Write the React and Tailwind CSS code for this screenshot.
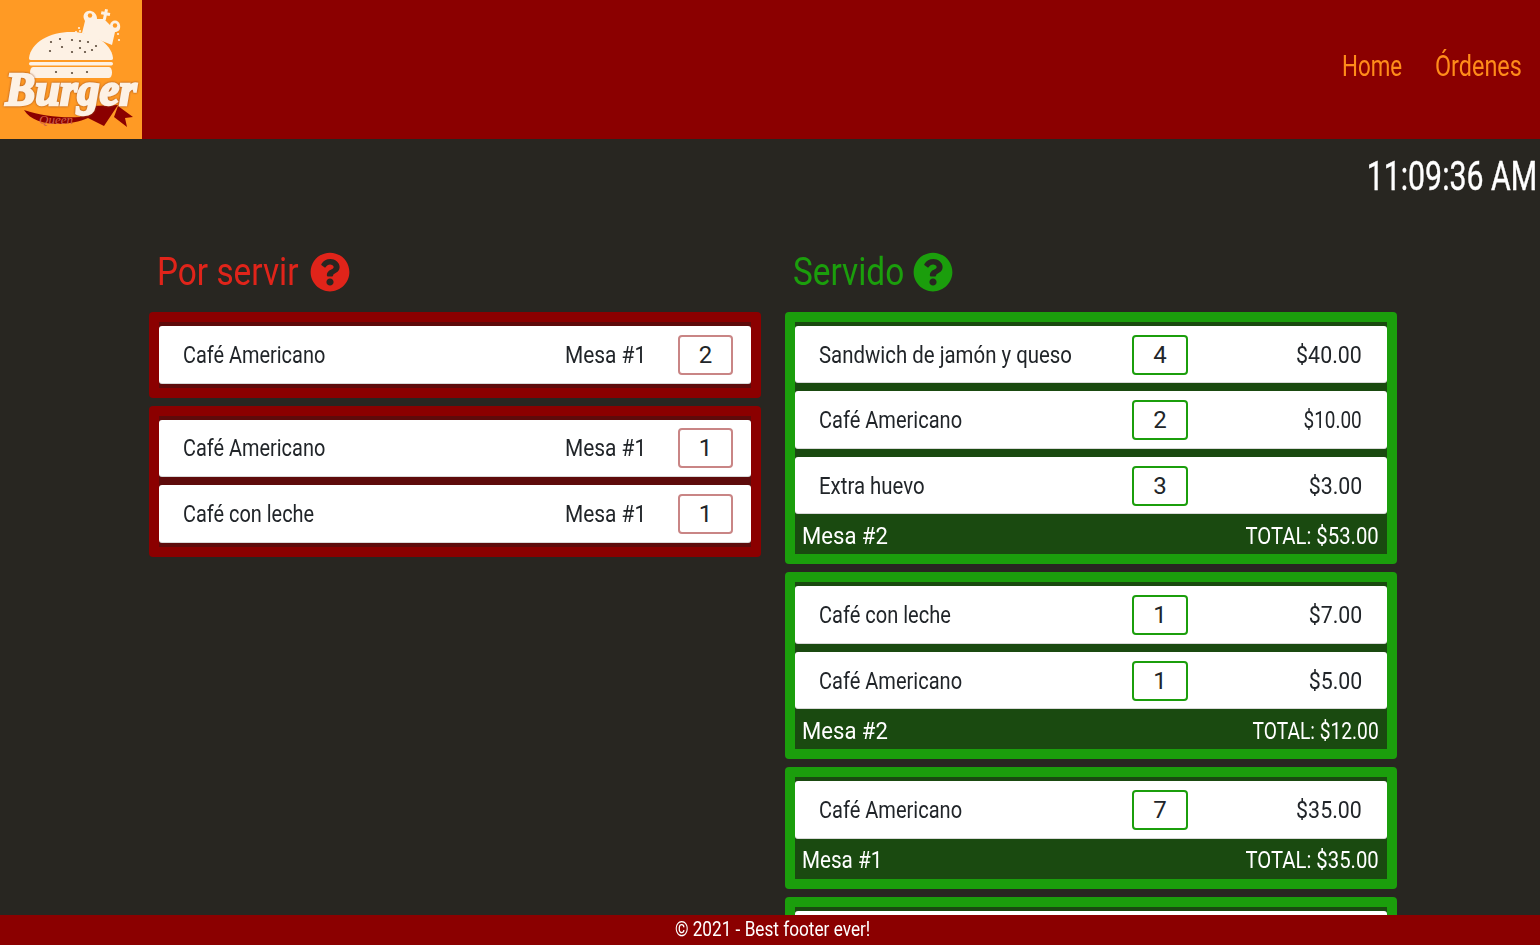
import { FaQuestionCircle } from 'react-icons/fa'

const PENDING = [
  [{ name: 'Café Americano', table: 'Mesa #1', qty: 2 }],
  [
    { name: 'Café Americano', table: 'Mesa #1', qty: 1 },
    { name: 'Café con leche', table: 'Mesa #1', qty: 1 },
  ],
]

const SERVED = [
  {
    table: 'Mesa #2',
    total: 'TOTAL: $53.00',
    items: [
      { name: 'Sandwich de jamón y queso', qty: 4, price: '$40.00', wide: true },
      { name: 'Café Americano', qty: 2, price: '$10.00', narrowPrice: true },
      { name: 'Extra huevo', qty: 3, price: '$3.00', wide: true },
    ],
  },
  {
    table: 'Mesa #2',
    total: 'TOTAL: $12.00',
    narrowTotal: true,
    items: [
      { name: 'Café con leche', qty: 1, price: '$7.00' },
      { name: 'Café Americano', qty: 1, price: '$5.00' },
    ],
  },
  {
    table: 'Mesa #1',
    total: 'TOTAL: $35.00',
    items: [{ name: 'Café Americano', qty: 7, price: '$35.00' }],
  },
  { hideFooter: true, items: [] },
]

export default function App() {
  return (
    <div className="flex h-screen flex-col overflow-hidden bg-[#282621] font-['Roboto',sans-serif]">
      <header className="flex h-[139px] shrink-0 items-start justify-between bg-[#8b0000]">
        <Logo />
        <nav className="mt-[48px] mr-[19px] flex gap-[32px] text-[30px] leading-[36px] text-[#ff8c1a]">
          <a className="w-[60px]"><span className="-ml-[1px] inline-block origin-left scale-x-[0.745] whitespace-nowrap">Home</span></a>
          <a className="w-[86px]"><span className="inline-block origin-left scale-x-[0.78] whitespace-nowrap">Órdenes</span></a>
        </nav>
      </header>

      <main className="min-h-0 flex-1 overflow-hidden">
        <div className="mt-[15px] pr-[3px] text-right text-[40px] leading-[46px] text-white">
          <span className="inline-block origin-right scale-x-[0.757] whitespace-nowrap [-webkit-text-stroke:0.4px_white]">11:09:36 AM</span>
        </div>

        <div className="mt-[51px] ml-[149px] flex w-[1248px] gap-[24px]">
          <section className="w-[612px] pt-[0.1px]">
            <Title color="text-[#e0241a]" textWidth="w-[143px]">Por servir</Title>
            <div className="flex flex-col gap-2">
              {PENDING.map((order, i) => (
                <Card key={i} tone="red">
                  {order.map((item, j) => (
                    <PendingRow key={j} item={item} />
                  ))}
                </Card>
              ))}
            </div>
          </section>

          <section className="w-[612px]">
            <Title color="text-[#1b9e0c]" textWidth="w-[110px]">Servido</Title>
            <div className="flex flex-col gap-2">
              {SERVED.map((order, i) => (
                <Card key={i} tone="green" footer={order.hideFooter ? null : order}>
                  {order.items.length > 0
                    ? order.items.map((item, j) => <ServedRow key={j} item={item} />)
                    : <div className="h-[57.5px] rounded-[3px] bg-white" />}
                </Card>
              ))}
            </div>
          </section>
        </div>
      </main>

      <footer className="h-[30px] shrink-0 bg-[#8b0000] pl-[6px] text-center text-[20px] leading-[28px] text-white">
        <span className="inline-block scale-x-[0.86] whitespace-nowrap">© 2021 - Best footer ever!</span>
      </footer>
    </div>
  )
}

function Title({ children, color, textWidth }) {
  return (
    <h2 className={`mb-[18.9px] flex h-[42px] items-center pl-[8px] text-[39px] leading-[42px] ${color}`}>
      <span className={textWidth}>
        <span className="inline-block origin-left scale-x-[0.855] whitespace-nowrap">{children}</span>
      </span>
      <FaQuestionCircle className="ml-[9.5px] h-[40px] w-[40px]" />
    </h2>
  )
}

function Card({ tone, footer, children }) {
  const outer = tone === 'red' ? 'bg-[#8b0000]' : 'bg-[#1b9e0c]'
  const inner = tone === 'red' ? 'bg-[#5e0b0b]' : 'bg-[#1a4a10]'
  return (
    <div className={`rounded-[4px] p-[10px] ${outer}`}>
      <div className={`${inner} ${footer ? 'pt-[4px]' : 'py-[4px]'}`}>
        <div className="flex flex-col gap-2">{children}</div>
        {footer && (
          <div className="flex h-[40px] items-center justify-between pt-[3px] pr-[8px] pl-[7px] text-[24px] text-white">
            <span className={`inline-block origin-left whitespace-nowrap ${footer.table === 'Mesa #1' ? 'scale-x-[0.86]' : 'scale-x-[0.92]'}`}>{footer.table}</span>
            <span className={`inline-block origin-right whitespace-nowrap ${footer.narrowTotal ? 'scale-x-[0.8]' : 'scale-x-[0.845]'}`}>{footer.total}</span>
          </div>
        )}
      </div>
    </div>
  )
}

function PendingRow({ item }) {
  return (
    <div className="flex h-[57.6px] items-center rounded-[3px] bg-white pl-[24px] text-[24px] text-[#212529] shadow-[inset_0_-1px_0_rgba(0,0,0,0.15)]">
      <span className="w-[382px]"><span className="inline-block origin-left scale-x-[0.83] whitespace-nowrap">{item.name}</span></span>
      <span className="w-[113px]"><span className="inline-block origin-left scale-x-[0.87] whitespace-nowrap">{item.table}</span></span>
      <Qty className="w-[55px] border-[#c98585]">{item.qty}</Qty>
    </div>
  )
}

function ServedRow({ item }) {
  return (
    <div className="flex h-[57.5px] items-center rounded-[3px] bg-white pr-[25px] pl-[24px] text-[24px] text-[#212529] shadow-[inset_0_-1px_0_rgba(0,0,0,0.15)]">
      <span className="w-[313px]"><span className={`inline-block origin-left whitespace-nowrap ${item.wide ? 'scale-x-[0.85]' : 'scale-x-[0.835]'}`}>{item.name}</span></span>
      <Qty className="w-[56px] border-[#1b9e0c]">{item.qty}</Qty>
      <span className="flex-1 text-right"><span className={`inline-block origin-right whitespace-nowrap ${item.narrowPrice ? 'scale-x-[0.79]' : 'scale-x-[0.89]'}`}>{item.price}</span></span>
    </div>
  )
}

function Qty({ className, children }) {
  return (
    <span className={`flex h-[40px] items-center justify-center rounded-[4px] border-2 bg-white text-[24px] ${className}`}>
      {children}
    </span>
  )
}

const CREAM = '#fdf1e4'
const ORANGE = '#ff9a24'

function Logo() {
  return (
    <svg className="h-[139px] w-[142px] shrink-0" viewBox="0 0 142 139">
      <rect width="142" height="139" fill={ORANGE} />
      {/* crown */}
      <path
        d="M82 33 L85 21 C81 15 86 10 91 11 C95 12 97 15 97 19 L104 19 L110 25 C111 19 119 19 120 25 C121 30 118 32 115 32 L112 45 Z"
        fill={CREAM}
      />
      <circle cx="90" cy="15.5" r="2.2" fill={ORANGE} />
      <circle cx="115" cy="25.5" r="2.2" fill={ORANGE} />
      <path d="M104 9 h3 v3 h3 v3 h-3 v5 h-3 v-5 h-3 v-3 h3 z" fill={CREAM} transform="rotate(12 105 14)" />
      {[[76, 32], [79, 28], [80, 31], [118, 34], [119, 40]].map(([x, y], i) => (
        <circle key={i} cx={x} cy={y} r="1.1" fill={CREAM} />
      ))}
      {/* bun and patty */}
      <path d="M29 58 C31 42 50 32 71 32 C92 32 111 42 113 58 C113 60 112 60 110 60 L32 60 C30 60 29 60 29 58 Z" fill={CREAM} />
      {[[51, 42], [60, 39], [72, 40], [80, 41], [88, 42], [96, 46], [50, 51], [62, 47], [72, 52], [80, 48], [85, 52], [92, 50]].map(([x, y], i) => (
        <circle key={i} cx={x} cy={y} r="1.1" fill="#5a4a3a" />
      ))}
      <rect x="29" y="62" width="84" height="3.5" rx="1.7" fill={CREAM} />
      <path d="M33 67 L109 67 C113 67 113 78 109 78 L33 78 C29 78 29 67 33 67 Z" fill={CREAM} />
      {[[56, 72], [72, 73], [87, 72]].map(([x, y], i) => (
        <circle key={i} cx={x} cy={y} r="1.1" fill="#5a4a3a" />
      ))}
      {/* ribbon */}
      <path d="M24 110 C42 116 60 118 80 117 L92 106 L118 105 L104 126 L88 118 C70 126 35 128 24 110 Z" fill="#8b0000" />
      <path d="M118 106 L133 117 L125 118 L127 127 L114 117 Z" fill="#8b0000" />
      <text x="39" y="124" fontFamily="'Liberation Serif', serif" fontStyle="italic" fontSize="13" fill="#d0604a">Queen</text>
      {/* wordmark */}
      <text
        x="71"
        y="105"
        textAnchor="middle"
        fontFamily="'Liberation Serif', serif"
        fontStyle="italic"
        fontWeight="700"
        fontSize="46"
        fill={CREAM}
        stroke={CREAM}
        strokeWidth="2.5"
        textLength="131"
        lengthAdjust="spacingAndGlyphs"
        className="drop-shadow-[0_0_1px_#9c4a1a]"
      >
        Burger
      </text>
    </svg>
  )
}
